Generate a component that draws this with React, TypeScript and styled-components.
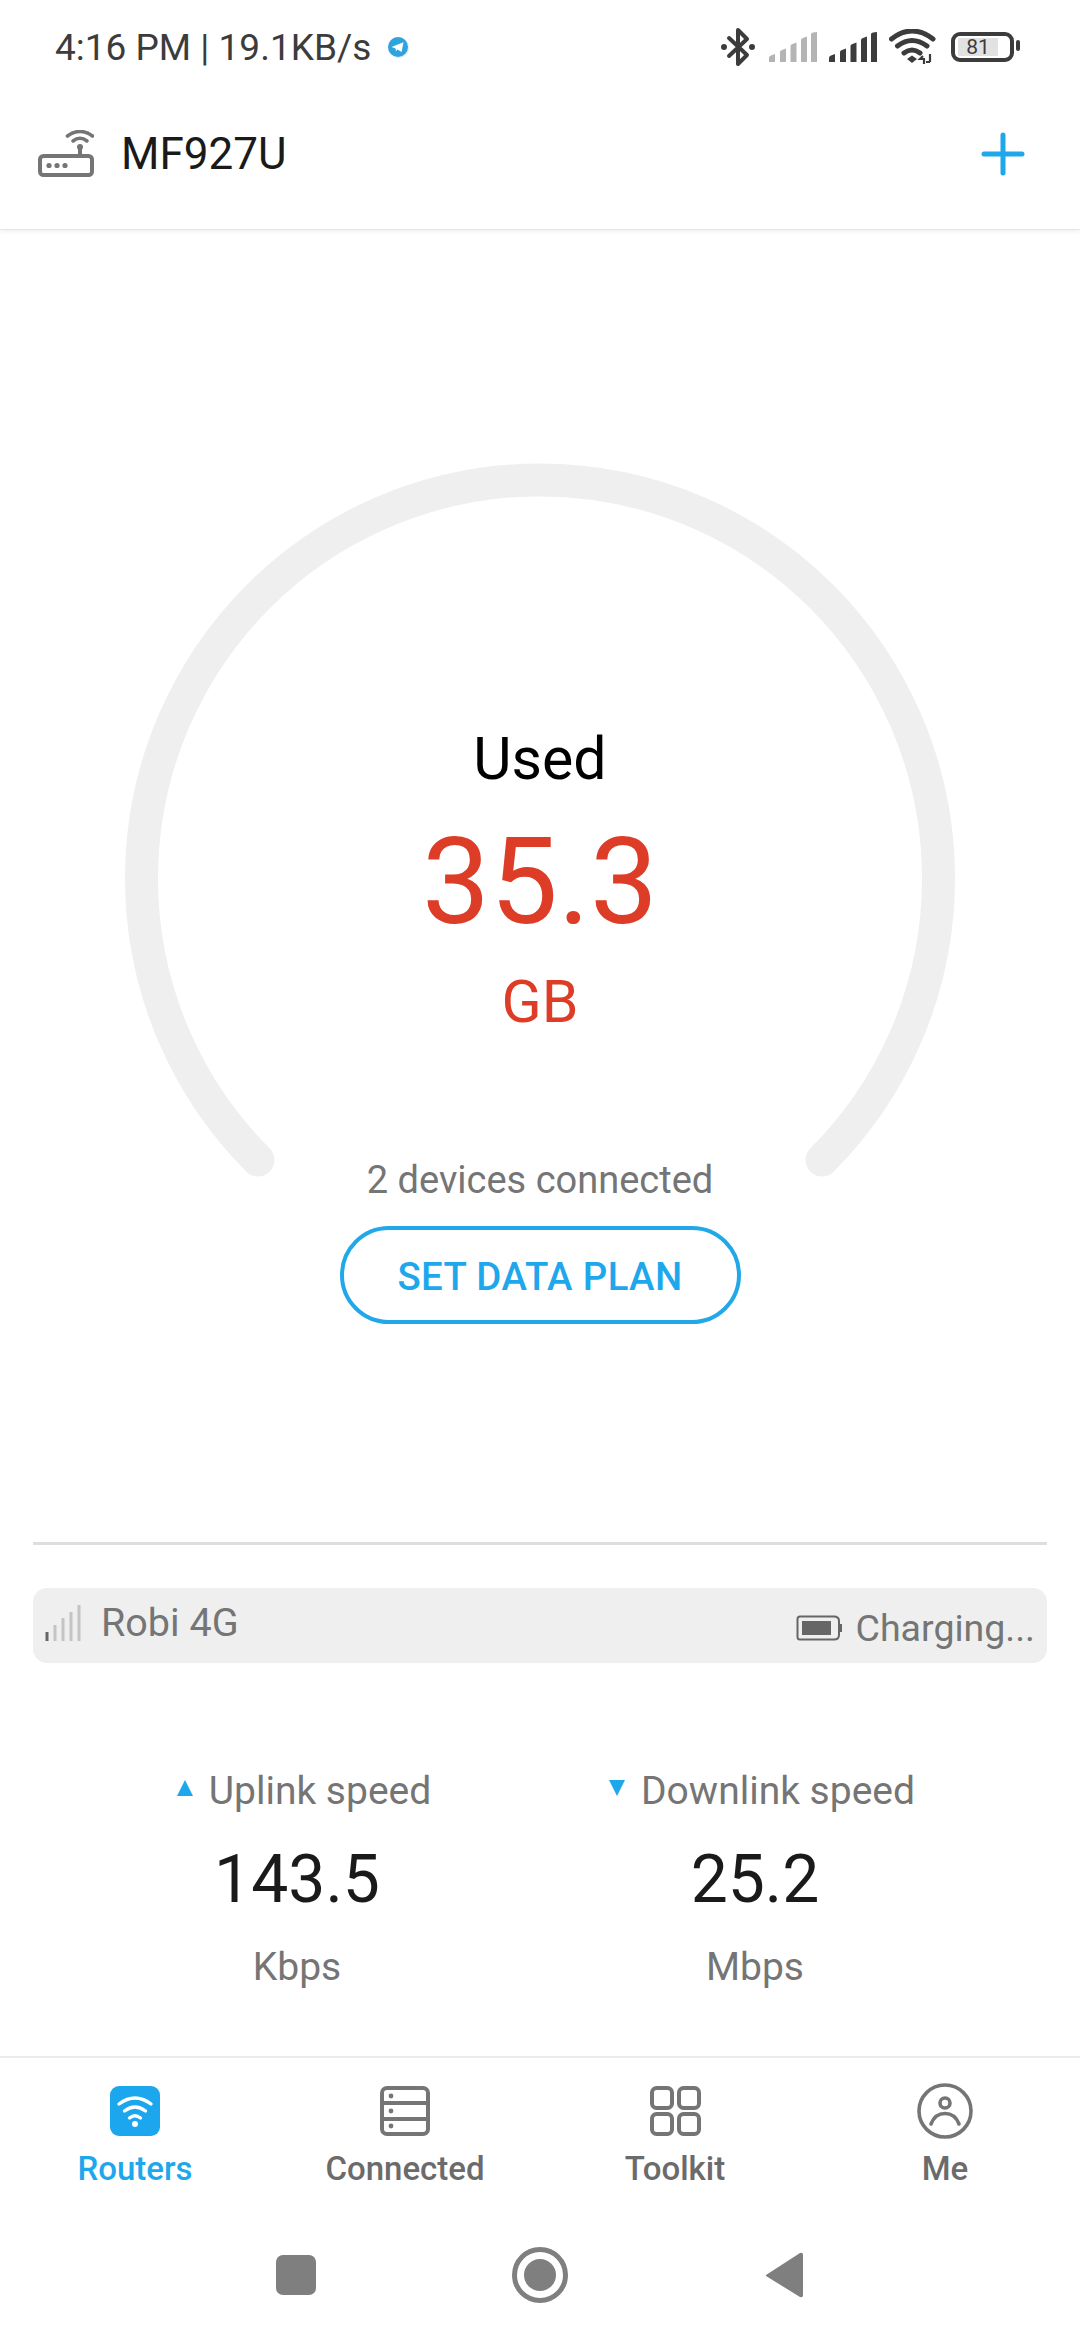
import React from "react";
import styled, { createGlobalStyle } from "styled-components";

const Global = createGlobalStyle`
  html, body { margin: 0; padding: 0; background: #fff; }
  #root { width: 1080px; height: 2340px; }
  * { box-sizing: border-box; }
`;

const BLUE = "#1fa7ec";
const GRAY = "#757575";

const Page = styled.div`
  width: 1080px;
  height: 2340px;
  display: flex;
  flex-direction: column;
  background: #fff;
  overflow: hidden;
  font-family: Roboto, "Liberation Sans", sans-serif;
`;

const Top = styled.header`
  height: 230px;
  flex: none;
  display: flex;
  flex-direction: column;
  border-bottom: 1px solid #e6e6e6;
  box-shadow: 0 2px 4px rgba(0, 0, 0, 0.06);
`;

const StatusBar = styled.div`
  height: 94px;
  display: flex;
  align-items: center;
  justify-content: space-between;
  padding: 0 66px 0 55px;
`;

const StatusLeft = styled.div`
  display: flex;
  align-items: center;
  gap: 15px;
`;

const StatusText = styled.span`
  font-size: 37px;
  color: #3c3c3c;
  line-height: 1;
`;

const StatusRight = styled.div`
  display: flex;
  align-items: center;
  gap: 12px;
`;

const Battery = styled.div`
  position: relative;
  width: 63px;
  height: 30px;
  margin-left: 2px;
  border: 4px solid #3c3c3c;
  border-radius: 9px;
  display: flex;
  align-items: center;
  padding-left: 3px;
`;

const BatteryFill = styled.div`
  width: 40px;
  height: 18px;
  background: #e2e2e2;
  color: #3c3c3c;
  font-size: 21px;
  line-height: 18px;
  text-align: center;
  border-radius: 1px;
`;

const BatteryNub = styled.span`
  position: absolute;
  right: -10px;
  top: 4px;
  width: 4px;
  height: 11px;
  border-radius: 2px;
  background: #3c3c3c;
`;

const AppBar = styled.div`
  flex: 1;
  display: flex;
  align-items: center;
  justify-content: space-between;
  padding: 0 55px 16px 38px;
`;

const AppTitleGroup = styled.div`
  display: flex;
  align-items: center;
  gap: 27px;
`;

const AppTitle = styled.h1`
  margin: 0;
  font-size: 44px;
  font-weight: 400;
  color: #1a1a1a;
  line-height: 1;
`;

const GaugeSection = styled.section`
  height: 1312px;
  flex: none;
  display: grid;
  justify-items: center;
  align-items: start;
  padding-top: 232px;
  > * { grid-area: 1 / 1; }
`;

const GaugeText = styled.div`
  display: flex;
  flex-direction: column;
  align-items: center;
  padding-top: 258px;
`;

const UsedLabel = styled.div`
  font-size: 59px;
  line-height: 78px;
  color: #000;
  margin-top: 0;
`;

const UsedValue = styled.div`
  font-size: 121px;
  line-height: 140px;
  color: #dd3c27;
  margin-top: 14px;
`;

const UsedUnit = styled.div`
  font-size: 59px;
  line-height: 70px;
  color: #dd3c27;
  margin-top: 15px;
`;

const Devices = styled.div`
  font-size: 38px;
  line-height: 46px;
  color: ${GRAY};
  margin-top: 120px;
`;

const PlanButton = styled.button`
  width: 401px;
  height: 98px;
  margin-top: 23px;
  padding: 3px 0 0;
  border: 4px solid #22a8e9;
  border-radius: 49px;
  background: #fff;
  color: ${BLUE};
  font-family: inherit;
  font-size: 38.4px;
  font-weight: 500;
  letter-spacing: 0.4px;
`;

const Divider = styled.hr`
  flex: none;
  width: 1014px;
  height: 3px;
  margin: 0 33px;
  border: none;
  background: #dedede;
`;

const InfoBar = styled.div`
  flex: none;
  width: 1014px;
  height: 75px;
  margin: 43px 33px 0;
  padding: 0 12px 0 12px;
  background: #efefef;
  border-radius: 14px;
  display: flex;
  align-items: center;
  justify-content: space-between;
  color: ${GRAY};
`;

const InfoSide = styled.div<{ $shift: number; $gap: number; $size: number }>`
  display: flex;
  align-items: center;
  gap: ${(p) => p.$gap}px;
  font-size: ${(p) => p.$size}px;
  transform: translateY(${(p) => p.$shift}px);
`;

const SpeedRow = styled.section`
  flex: none;
  display: grid;
  grid-template-columns: 594px 322px;
  padding-top: 105px;
`;

const SpeedCol = styled.div`
  display: flex;
  flex-direction: column;
  align-items: center;
`;

const SpeedLabel = styled.div`
  display: flex;
  align-items: center;
  gap: 16px;
  padding-left: 14px;
  font-size: 39px;
  line-height: 46px;
  color: ${GRAY};
`;

const SpeedValue = styled.div`
  font-size: 66px;
  line-height: 74px;
  color: #1a1a1a;
  margin-top: 29px;
`;

const SpeedUnit = styled.div`
  font-size: 39px;
  line-height: 46px;
  color: ${GRAY};
  margin-top: 27px;
`;

const Tabs = styled.nav`
  flex: none;
  margin-top: 66px;
  height: 126px;
  display: grid;
  grid-template-columns: repeat(4, 270px);
  border-top: 2px solid #ebebeb;
`;

const Tab = styled.div<{ $active?: boolean }>`
  display: flex;
  flex-direction: column;
  align-items: center;
  padding-top: 25px;
  color: ${(p) => (p.$active ? BLUE : "#6b6b6b")};
  font-size: 33px;
  font-weight: 500;
`;

const TabIconSlot = styled.div`
  height: 56px;
  display: flex;
  align-items: center;
  justify-content: center;
`;

const TabLabel = styled.span`
  line-height: 38px;
  margin-top: 11px;
`;

const SystemNav = styled.div`
  flex: 1;
  display: flex;
  align-items: center;
  justify-content: center;
  padding-top: 28px;
`;

const SystemSlot = styled.div`
  width: 244px;
  display: flex;
  justify-content: center;
`;

const Svg = styled.svg`
  display: block;
  flex: none;
`;

const TriangleSvg = styled(Svg)`
  transform: translateY(-3px);
`;

const Telegram = () => (
  <Svg width="24" height="24" viewBox="0 0 24 24">
    <circle cx="12.6" cy="12.6" r="10.6" fill="#e6ecfa" />
    <circle cx="12" cy="12" r="10" fill="#2fa3de" />
    <path d="M5.5 12 L17.5 7.2 L15.6 17 L11.5 14.4 L10 16.2 L9.6 13.4 Z" fill="#fff" />
  </Svg>
);

const Bluetooth = () => (
  <Svg width="37" height="40" viewBox="0 0 37 40" fill="none" stroke="#3c3c3c" strokeWidth="4" strokeLinecap="round" strokeLinejoin="round">
    <path d="M9 11 L27 28 L18 37 V3 L27 12 L9 29" />
    <circle cx="4" cy="20" r="2" fill="#3c3c3c" strokeWidth="2" />
    <circle cx="32" cy="20" r="2" fill="#3c3c3c" strokeWidth="2" />
  </Svg>
);

const Signal = ({ color }: { color: string }) => (
  <Svg width="48" height="30" viewBox="0 0 48 30" fill={color}>
    <path d="M0 30 V26 Q0 24 2 23.5 L6 22 V30 Z" />
    <path d="M11 30 V20 Q11 18.5 13 18 L17 16.5 V30 Z" />
    <path d="M21.5 30 V14 Q21.5 12.5 23.5 12 L27.5 10.5 V30 Z" />
    <path d="M32 30 V8 Q32 6.5 34 6 L38 4.5 V30 Z" />
    <path d="M42 30 V2 Q42 1 44 0.5 L48 0 V30 Z" />
  </Svg>
);

const Wifi = () => (
  <Svg width="48" height="36" viewBox="0 0 48 36" fill="none" stroke="#3c3c3c" strokeWidth="5" strokeLinecap="round">
    <path d="M2.5 10 Q23 -6 44 10" />
    <path d="M8.5 17 Q23 6 38 17" />
    <path d="M15 24 Q23 18 31 24" />
    <path d="M18 30 L23 26.5 L28 30 L23 34 Z" fill="#3c3c3c" stroke="none" />
    <path d="M34 27 L31 30 H35 V35 M41 25 V33 M41 33 H37" strokeWidth="2.2" strokeLinecap="butt" />
  </Svg>
);

const RouterIcon = () => (
  <Svg width="56" height="47" viewBox="0 0 56 47" fill="none" stroke={GRAY}>
    <rect x="2" y="26" width="52" height="19" rx="3.5" strokeWidth="4" />
    <circle cx="11" cy="35.5" r="2.6" fill={GRAY} stroke="none" />
    <circle cx="19" cy="35.5" r="2.6" fill={GRAY} stroke="none" />
    <circle cx="27" cy="35.5" r="2.6" fill={GRAY} stroke="none" />
    <path d="M42 18 V26" strokeWidth="4" />
    <circle cx="42" cy="17" r="3" fill={GRAY} stroke="none" />
    <path d="M35 11 Q42 5.5 49 11" strokeWidth="3.6" strokeLinecap="round" />
    <path d="M29.5 6 Q42 -3 54.5 6" strokeWidth="3.6" strokeLinecap="round" />
  </Svg>
);

const Plus = () => (
  <Svg width="44" height="44" viewBox="0 0 44 44" stroke={BLUE} strokeWidth="5" strokeLinecap="round">
    <path d="M22 3 V41 M3 22 H41" />
  </Svg>
);

const Gauge = () => (
  <Svg width="830" height="830" viewBox="0 0 830 830" fill="none" stroke="#efefef" strokeWidth="33" strokeLinecap="round">
    <path d="M133 698 A398.5 398.5 0 1 1 697 698" />
  </Svg>
);

const ThinSignal = () => (
  <Svg width="36" height="36" viewBox="0 0 36 36" strokeWidth="3">
    <path d="M2 36 V27" stroke="#666" />
    <path d="M10 36 V20 M18 36 V13 M26 36 V7 M34 36 V0" stroke="#c4c4c4" />
  </Svg>
);

const ChargeBattery = () => (
  <Svg width="46" height="26" viewBox="0 0 46 26" fill="none">
    <path d="M4 1.5 H38 Q43 1.5 43 6 V20 Q43 24.5 38 24.5 H4 Q1.5 24.5 1.5 22 V4 Q1.5 1.5 4 1.5 Z" stroke="#666" strokeWidth="2" />
    <rect x="6" y="6" width="29" height="14" fill="#666" />
    <rect x="43" y="9" width="3" height="8" fill="#666" />
  </Svg>
);

const Triangle = ({ down }: { down?: boolean }) => (
  <TriangleSvg width="16" height="16" viewBox="0 0 16 16" fill={BLUE}>
    <path d={down ? "M0 0 H16 L8 16 Z" : "M8 0 L16 16 H0 Z"} />
  </TriangleSvg>
);

const WifiTab = () => (
  <Svg width="50" height="50" viewBox="0 0 50 50">
    <rect width="50" height="50" rx="9" fill="#1ba6ee" />
    <g fill="none" stroke="#fff" strokeWidth="3.4" strokeLinecap="round">
      <path d="M9 18 Q25 6 41 18" />
      <path d="M14.5 25 Q25 17 35.5 25" />
      <path d="M19.5 32 Q25 27.5 30.5 32" />
    </g>
    <circle cx="25" cy="38" r="3" fill="#fff" />
  </Svg>
);

const ServerTab = () => (
  <Svg width="50" height="50" viewBox="0 0 50 50" fill="none" stroke={GRAY} strokeWidth="4">
    <rect x="2" y="2" width="46" height="46" rx="5" />
    <path d="M2 17 H48 M2 33 H48" />
    <g fill={GRAY} stroke="none">
      <circle cx="11" cy="10" r="2.4" />
      <circle cx="11" cy="25" r="2.4" />
      <circle cx="11" cy="40" r="2.4" />
    </g>
  </Svg>
);

const GridTab = () => (
  <Svg width="51" height="50" viewBox="0 0 51 50" fill="none" stroke={GRAY} strokeWidth="4">
    <rect x="2" y="2" width="20" height="20" rx="4.5" />
    <rect x="29" y="2" width="20" height="20" rx="4.5" />
    <rect x="2" y="28" width="20" height="20" rx="4.5" />
    <rect x="29" y="28" width="20" height="20" rx="4.5" />
  </Svg>
);

const UserTab = () => (
  <Svg width="56" height="56" viewBox="0 0 56 56" fill="none" stroke={GRAY} strokeWidth="3.6">
    <circle cx="28" cy="28" r="26" />
    <circle cx="28" cy="20" r="5" />
    <path d="M14 41 Q18 30.5 28 30.5 Q38 30.5 42 41" strokeLinecap="round" />
  </Svg>
);

const NavSquare = () => (
  <Svg width="40" height="40" viewBox="0 0 40 40">
    <rect width="40" height="40" rx="7" fill="#7f7f7f" />
  </Svg>
);

const NavCircle = () => (
  <Svg width="56" height="56" viewBox="0 0 56 56">
    <circle cx="28" cy="28" r="25.5" fill="none" stroke="#7f7f7f" strokeWidth="5" />
    <circle cx="28" cy="28" r="16" fill="#7f7f7f" />
  </Svg>
);

const NavBack = () => (
  <Svg width="38" height="46" viewBox="0 0 38 46">
    <path d="M1 23 L35 1 Q38 0 38 3 V43 Q38 46 35 45 L1 24 Z" fill="#7f7f7f" />
  </Svg>
);

export default function App() {
  return (
    <Page>
      <Global />
      <Top>
        <StatusBar>
          <StatusLeft>
            <StatusText>4:16 PM | 19.1KB/s</StatusText>
            <Telegram />
          </StatusLeft>
          <StatusRight>
            <Bluetooth />
            <Signal color="#b4b4b4" />
            <Signal color="#3c3c3c" />
            <Wifi />
            <Battery>
              <BatteryFill>81</BatteryFill>
              <BatteryNub />
            </Battery>
          </StatusRight>
        </StatusBar>
        <AppBar>
          <AppTitleGroup>
            <RouterIcon />
            <AppTitle>MF927U</AppTitle>
          </AppTitleGroup>
          <Plus />
        </AppBar>
      </Top>
      <GaugeSection>
        <Gauge />
        <GaugeText>
          <UsedLabel>Used</UsedLabel>
          <UsedValue>35.3</UsedValue>
          <UsedUnit>GB</UsedUnit>
          <Devices>2 devices connected</Devices>
          <PlanButton>SET DATA PLAN</PlanButton>
        </GaugeText>
      </GaugeSection>
      <Divider />
      <InfoBar>
        <InfoSide $shift={-3} $gap={20} $size={39.5}>
          <ThinSignal />
          Robi 4G
        </InfoSide>
        <InfoSide $shift={2} $gap={14} $size={37.5}>
          <ChargeBattery />
          Charging...
        </InfoSide>
      </InfoBar>
      <SpeedRow>
        <SpeedCol>
          <SpeedLabel>
            <Triangle />
            Uplink speed
          </SpeedLabel>
          <SpeedValue>143.5</SpeedValue>
          <SpeedUnit>Kbps</SpeedUnit>
        </SpeedCol>
        <SpeedCol>
          <SpeedLabel>
            <Triangle down />
            Downlink speed
          </SpeedLabel>
          <SpeedValue>25.2</SpeedValue>
          <SpeedUnit>Mbps</SpeedUnit>
        </SpeedCol>
      </SpeedRow>
      <Tabs>
        <Tab $active>
          <TabIconSlot><WifiTab /></TabIconSlot>
          <TabLabel>Routers</TabLabel>
        </Tab>
        <Tab>
          <TabIconSlot><ServerTab /></TabIconSlot>
          <TabLabel>Connected</TabLabel>
        </Tab>
        <Tab>
          <TabIconSlot><GridTab /></TabIconSlot>
          <TabLabel>Toolkit</TabLabel>
        </Tab>
        <Tab>
          <TabIconSlot><UserTab /></TabIconSlot>
          <TabLabel>Me</TabLabel>
        </Tab>
      </Tabs>
      <SystemNav>
        <SystemSlot><NavSquare /></SystemSlot>
        <SystemSlot><NavCircle /></SystemSlot>
        <SystemSlot><NavBack /></SystemSlot>
      </SystemNav>
    </Page>
  );
}
